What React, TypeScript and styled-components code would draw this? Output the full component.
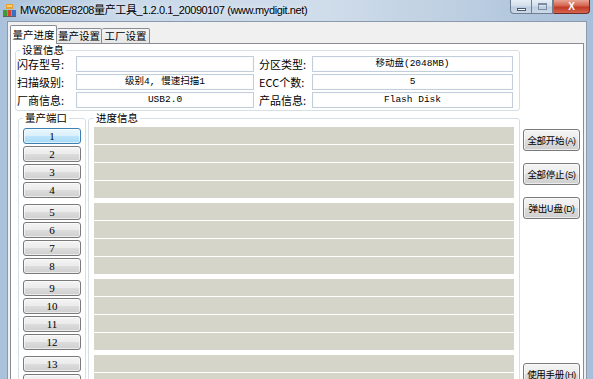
import React from 'react';
import styled, { createGlobalStyle } from 'styled-components';

const GlobalStyle = createGlobalStyle`
  html, body {
    margin: 0;
    padding: 0;
    background: #fff;
  }
  * {
    box-sizing: border-box;
  }
`;

const CJK = '"Noto Sans CJK SC", "Noto Sans", sans-serif';

const Window = styled.div`
  width: 593px;
  height: 379px;
  overflow: hidden;
  display: flex;
  flex-direction: column;
  background: linear-gradient(to right, #a9c1da 0%, #c9d9ea 20%, #cfdcea 55%, #bfd0e2 75%, #a7bfd9 100%);
  font-family: ${CJK};
  color: #000;
`;

const TitleBar = styled.div`
  height: 21px;
  flex-shrink: 0;
  display: flex;
  align-items: flex-start;
  padding-left: 3px;
  padding-right: 3px;
`;

const TitleIcon = styled.svg`
  margin-top: 4px;
  flex-shrink: 0;
`;

const TitleText = styled.div`
  margin-left: 4px;
  margin-top: 2px;
  font-family: "Liberation Sans", ${CJK};
  font-size: 11px;
  letter-spacing: -0.4px;
  line-height: 16px;
  color: #000;
  white-space: nowrap;
  text-shadow: 0 0 6px rgba(255, 255, 255, 0.9);
`;

const Controls = styled.div`
  margin-left: auto;
  display: flex;
  height: 14px;
`;

const ControlButton = styled.div<{ $w: number; $close?: boolean; $first?: boolean }>`
  width: ${p => p.$w}px;
  height: 14px;
  display: flex;
  align-items: center;
  justify-content: center;
  border: 1px solid ${p => (p.$close ? '#6b2d28' : '#6e7f94')};
  border-top: none;
  border-left: ${p => (p.$first || p.$close ? '1px solid #6e7f94' : 'none')};
  border-radius: ${p => (p.$first ? '0 0 0 4px' : p.$close ? '0 0 4px 0' : '0')};
  background: ${p =>
    p.$close
      ? 'linear-gradient(#e8a493, #d4634f 45%, #c13a25 55%, #d5654f)'
      : 'linear-gradient(#e6eef7, #d3dfec 45%, #bccde1 55%, #cdd9e8)'};
  color: ${p => (p.$close ? '#fff' : '#3a4a5e')};
  font: bold 10px "Liberation Sans", sans-serif;
`;

const MinGlyph = styled.div`
  width: 9px;
  height: 3px;
  margin-top: 5px;
  background: #fff;
  border: 1px solid #4a5a6e;
`;

const MaxGlyph = styled.div`
  width: 9px;
  height: 7px;
  border: 1px solid #7d8ca0;
  border-top-width: 2px;
  background: transparent;
`;

const Client = styled.div`
  flex: 1;
  min-height: 0;
  margin: 0 6px 0 7px;
  border: 1px solid #8a99ab;
  border-bottom: none;
  background: #f0f0f0;
  padding: 3px 2px 0 2px;
  display: flex;
  flex-direction: column;
`;

const TabRow = styled.div`
  display: flex;
  align-items: flex-end;
  height: 19px;
  margin-bottom: -1px;
  position: relative;
  z-index: 1;
`;

const Tab = styled.div<{ $active?: boolean; $w: number }>`
  width: ${p => p.$w}px;
  height: ${p => (p.$active ? 19 : 16)}px;
  border: 1px solid #898c95;
  border-bottom: ${p => (p.$active ? 'none' : '1px solid #898c95')};
  border-left: ${p => (p.$active ? '1px solid #898c95' : 'none')};
  border-radius: 2px 2px 0 0;
  background: ${p => (p.$active ? '#fff' : 'linear-gradient(#f3f3f3, #e6e6e6)')};
  font-size: 10.5px;
  line-height: ${p => (p.$active ? 17 : 14)}px;
  text-align: center;
  white-space: nowrap;
`;

const Panel = styled.div`
  flex: 1;
  min-height: 0;
  overflow: hidden;
  border: 1px solid #898c95;
  border-bottom: none;
  background: #fff;
  padding: 0 0 0 4px;
`;

const Group = styled.fieldset<{ $w: number; $pl: number; $pt?: number }>`
  margin: 0;
  width: ${p => p.$w}px;
  min-width: 0;
  border: 1px solid #d5dfe5;
  border-radius: 3px;
  padding: ${p => p.$pt ?? 0}px 5px 2px ${p => p.$pl}px;
  flex-shrink: 0;
`;

const Legend = styled.legend<{ $indent?: number }>`
  padding: 0 2px;
  margin-left: ${p => p.$indent ?? 0}px;
  font-size: 10.5px;
  line-height: 12px;
  color: #000;
`;

const SettingsGrid = styled.div`
  display: grid;
  grid-template-columns: 59px 178px 58px 201px;
  grid-auto-rows: 16px;
  row-gap: 2px;
`;

const Label = styled.div<{ $pl?: number }>`
  font-size: 11px;
  line-height: 16px;
  padding-left: ${p => p.$pl ?? 0}px;
  white-space: nowrap;
`;

const Field = styled.div`
  border: 1px solid #c2cfda;
  box-shadow: inset 0 0 0 1px #fbfcfd;
  background: #fff;
  font-family: "Liberation Mono", ${CJK};
  font-size: 9.5px;
  line-height: 14px;
  text-align: center;
  white-space: nowrap;
  overflow: hidden;
`;

const Lower = styled.div`
  display: flex;
  align-items: flex-start;
  margin-top: 1px;
`;

const PortsGroup = styled(Group)`
  margin-left: 3px;
`;

const ProgressGroup = styled(Group)`
  margin-left: 2px;
`;

const Stack = styled.div<{ $gap: number }>`
  display: flex;
  flex-direction: column;
  gap: ${p => p.$gap}px;
`;

const PortButton = styled.div<{ $active?: boolean }>`
  width: 58px;
  height: 16px;
  border: 1px solid ${p => (p.$active ? '#3c7fb1' : '#7a7a7a')};
  border-radius: 3px;
  background: ${p =>
    p.$active
      ? 'linear-gradient(#eaf6fd, #d9f0fc 50%, #bee6fd 50%, #a7d9f5)'
      : 'linear-gradient(#f4f4f4, #ebebeb 50%, #dddddd 50%, #cfcfcf)'};
  box-shadow: inset 0 0 0 1px rgba(255, 255, 255, 0.6);
  font: 11px/14px "Liberation Serif", serif;
  text-align: center;
`;

const Bar = styled.div`
  width: 420px;
  height: 17px;
  background: #d6d5c9;
`;

const ActionColumn = styled.div`
  display: flex;
  flex-direction: column;
  gap: 12px;
  margin-left: 3px;
  padding-top: 17px;
`;

const ActionButton = styled.div<{ $mt?: number }>`
  width: 57px;
  height: 22px;
  margin-top: ${p => p.$mt ?? 0}px;
  border: 1px solid #7a7a7a;
  border-radius: 3px;
  background: linear-gradient(#f4f4f4, #ebebeb 50%, #dddddd 50%, #cfcfcf);
  box-shadow: inset 0 0 0 1px rgba(255, 255, 255, 0.6);
  font-size: 9.5px;
  line-height: 20px;
  text-align: center;
  white-space: nowrap;
  letter-spacing: -0.3px;
`;

const Hotkey = styled.span`
  font-family: "Liberation Sans", sans-serif;
  font-size: 8.5px;
  margin-left: 1px;
`;

const settings = [
  ['闪存型号:', '', '分区类型:', '移动盘(2048MB)'],
  ['扫描级别:', '级别4, 慢速扫描1', 'ECC个数:', '5'],
  ['厂商信息:', 'USB2.0', '产品信息:', 'Flash Disk'],
];

const portGroups = [
  [1, 2, 3, 4],
  [5, 6, 7, 8],
  [9, 10, 11, 12],
  [13, 14, 15, 16],
];

const actions = [
  { label: '全部开始', key: '(A)' },
  { label: '全部停止', key: '(S)' },
  { label: '弹出U盘', key: '(D)' },
  { label: '使用手册', key: '(H)', mt: 132 },
];

function AppIcon() {
  return (
    <TitleIcon width="13" height="13" viewBox="0 0 13 13">
      <rect x="3" y="0" width="7" height="5" fill="#e8a030" />
      <rect x="4" y="1" width="5" height="2" fill="#f8d070" />
      <rect x="0" y="6" width="4" height="6" fill="#3f9a3a" />
      <rect x="4.5" y="6" width="4" height="6" fill="#d84030" />
      <rect x="9" y="6" width="4" height="6" fill="#3a70c0" />
      <rect x="0" y="12" width="13" height="1" fill="#606060" />
    </TitleIcon>
  );
}

export default function App() {
  return (
    <Window>
      <GlobalStyle />
      <TitleBar>
        <AppIcon />
        <TitleText>MW6208E/8208量产工具_1.2.0.1_20090107 (www.mydigit.net)</TitleText>
        <Controls>
          <ControlButton $w={22} $first>
            <MinGlyph />
          </ControlButton>
          <ControlButton $w={21}>
            <MaxGlyph />
          </ControlButton>
          <ControlButton $w={37} $close>
            X
          </ControlButton>
        </Controls>
      </TitleBar>
      <Client>
        <TabRow>
          <Tab $active $w={47}>量产进度</Tab>
          <Tab $w={45}>量产设置</Tab>
          <Tab $w={48}>工厂设置</Tab>
        </TabRow>
        <Panel>
          <Group $w={505} $pl={1}>
            <Legend $indent={3}>设置信息</Legend>
            <SettingsGrid>
              {settings.map(([l1, v1, l2, v2]) => (
                <React.Fragment key={l1}>
                  <Label>{l1}</Label>
                  <Field>{v1}</Field>
                  <Label $pl={5}>{l2}</Label>
                  <Field>{v2}</Field>
                </React.Fragment>
              ))}
            </SettingsGrid>
          </Group>
          <Lower>
            <PortsGroup $w={68} $pl={4} $pt={4}>
              <Legend>量产端口</Legend>
              <Stack $gap={6}>
                {portGroups.map(group => (
                  <Stack $gap={2} key={group[0]}>
                    {group.map(n => (
                      <PortButton key={n} $active={n === 1}>
                        {n}
                      </PortButton>
                    ))}
                  </Stack>
                ))}
              </Stack>
            </PortsGroup>
            <ProgressGroup $w={432} $pl={5} $pt={3}>
              <Legend>进度信息</Legend>
              <Stack $gap={5}>
                {portGroups.map(group => (
                  <Stack $gap={1} key={group[0]}>
                    {group.map(n => (
                      <Bar key={n} />
                    ))}
                  </Stack>
                ))}
              </Stack>
            </ProgressGroup>
            <ActionColumn>
              {actions.map(a => (
                <ActionButton key={a.label} $mt={a.mt}>
                  {a.label}
                  <Hotkey>{a.key}</Hotkey>
                </ActionButton>
              ))}
            </ActionColumn>
          </Lower>
        </Panel>
      </Client>
    </Window>
  );
}
